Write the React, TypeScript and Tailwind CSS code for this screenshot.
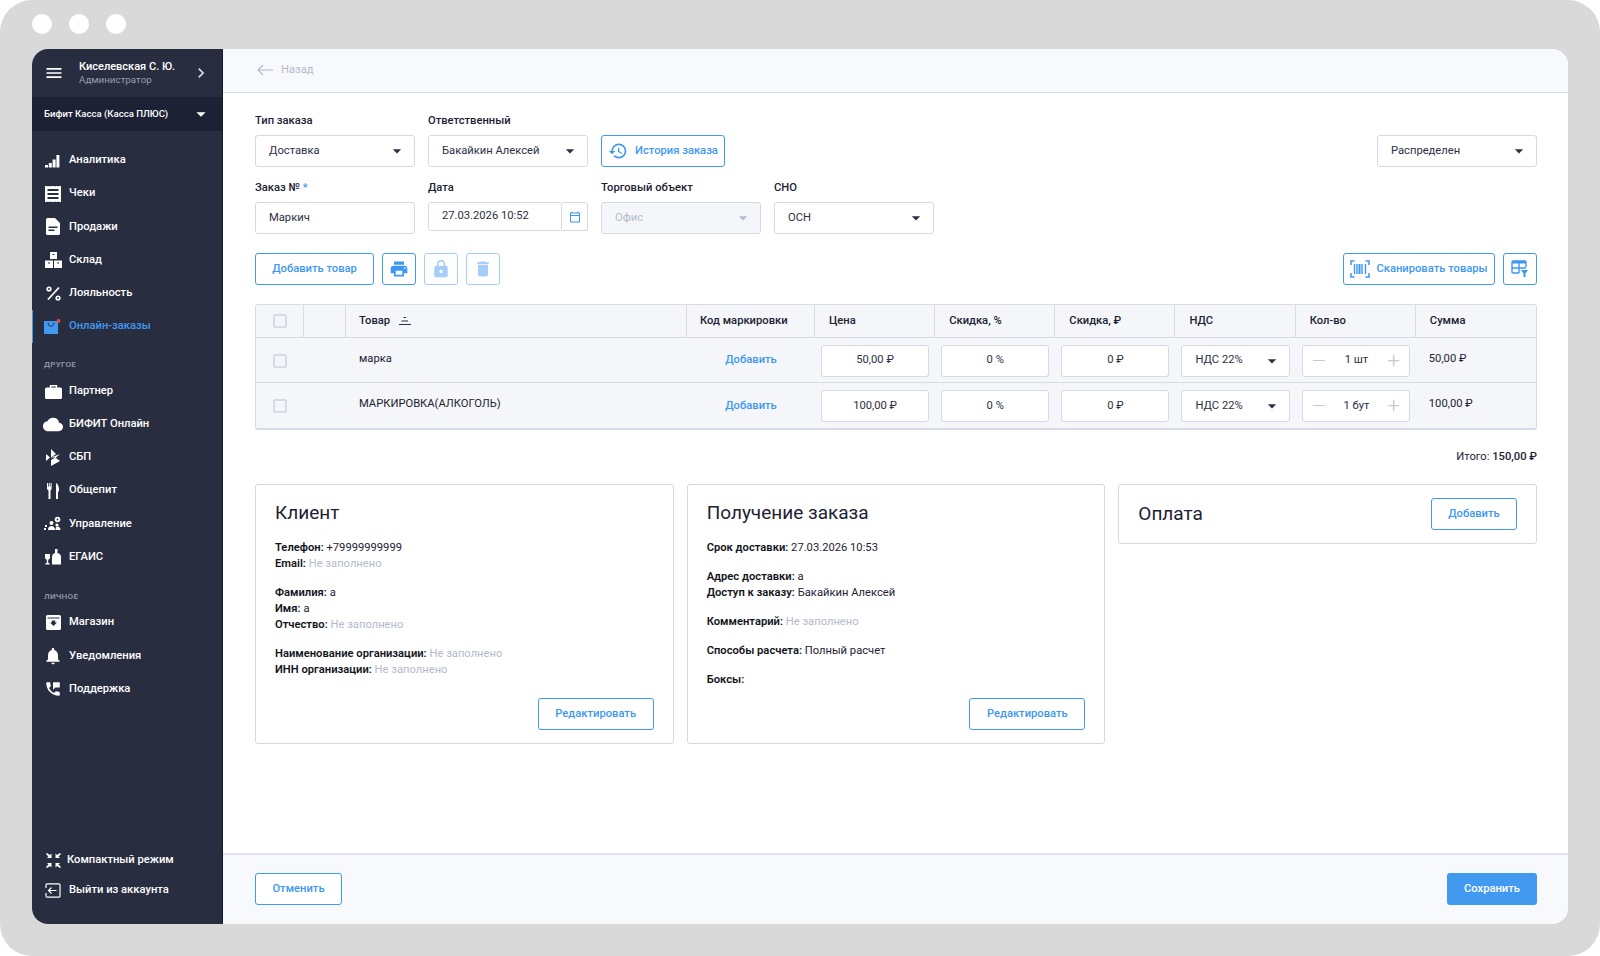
import React from "react";
import {
  MdMenu,
  MdChevronRight,
  MdArrowDropDown,
  MdPrint,
  MdLock,
  MdDelete,
  MdHistory,
  MdCloud,
  MdNotifications,
  MdPermPhoneMsg,
  MdOutlineCalendarToday,
} from "react-icons/md";

const Bars = () => (
  <svg width="16" height="14" viewBox="0 0 16 14" fill="#fff">
    <rect x="0" y="11" width="3" height="2.5" />
    <rect x="3.8" y="9" width="3" height="4.5" />
    <rect x="7.6" y="5.5" width="3" height="8" />
    <rect x="11.4" y="1" width="3" height="12.5" />
  </svg>
);
const Receipt = () => (
  <svg width="16" height="16" viewBox="0 0 16 16">
    <path
      fill="#fff"
      d="M0 0h2l1 .6L4 0h1l1 .6L7 0h2l1 .6L11 0h1l1 .6L14 0h2v16h-2l-1-.6-1 .6h-1l-1-.6-1 .6H7l-1-.6-1 .6H4l-1-.6-1 .6H0z"
    />
    <path fill="#292d40" d="M2.5 3h11v2h-11zM2.5 7h11v2h-11zM2.5 11h11v2h-11z" />
  </svg>
);
const Doc = () => (
  <svg width="14" height="17" viewBox="0 0 14 17">
    <path fill="#fff" d="M1.5 0H9l5 5v10.5a1.5 1.5 0 0 1-1.5 1.5h-11A1.5 1.5 0 0 1 0 15.500V1.500A1.500 1.500 0 0 1 1.500 0z" />
    <path fill="#292d40" d="M2.500 8.500h9v1.500h-9zM2.500 11.500h6v1.500h-6z" />
  </svg>
);
const Boxes = () => (
  <svg width="17" height="16" viewBox="0 0 17 16" fill="#fff">
    <path d="M5 0h7v7H5zM0 8.500h8V16H0zM9 8.500h8V16H9z" />
    <path fill="#292d40" d="M7.500 2h2v1h-2zM3 10.500h2v1H3zM12 10.500h2v1h-2z" />
  </svg>
);
const Percent = () => (
  <svg width="15" height="15" viewBox="0 0 15 15" fill="none" stroke="#fff">
    <circle cx="3" cy="3" r="1.800" strokeWidth="1.600" />
    <circle cx="12" cy="12" r="1.800" strokeWidth="1.600" />
    <path d="M13 1.500 2 13.500" strokeWidth="1.800" />
  </svg>
);
const Bag = () => (
  <svg width="18" height="15" viewBox="0 0 18 15">
    <path fill="#4299f0" d="M0 2h14v13H0z" />
    <path fill="none" stroke="#292d40" strokeWidth="1" d="M4 3.500c0 5 6 5 6 0" />
    <circle cx="14.500" cy="2" r="2" fill="#e2474c" />
  </svg>
);
const Briefcase = () => (
  <svg width="17" height="15" viewBox="0 0 17 15" fill="#fff">
    <path fill="none" stroke="#fff" strokeWidth="1.400" d="M5.500 4V1.700h6V4" />
    <rect x="0" y="3.500" width="17" height="11.500" rx="1.500" />
  </svg>
);
const Sbp = () => (
  <svg width="15" height="17" viewBox="0 0 15 17" fill="#fff">
    <path d="M5 0l5 5-5 3.500zM5 17l9-5-4.500-3.500L5 11zM0 5l4 3.500L0 12zM5 8.500l9-3.500-4 3.500z" />
  </svg>
);
const Cutlery = () => (
  <svg width="13" height="16" viewBox="0 0 13 16" fill="#fff">
    <path d="M0 0h1v3.500h.8V0h1v3.500h.8V0h1v6L3.500 7.500V16H1.500V7.500L0 6zM9 0c2 1 3 3 3 7.500v1h-1V16H9z" />
  </svg>
);
const Manage = () => (
  <svg width="18" height="15" viewBox="0 0 18 15" fill="#fff">
    <rect x="0" y="12" width="2" height="2" />
    <rect x="1" y="9" width="2" height="2" />
    <circle cx="7.500" cy="7" r="2" />
    <path d="M4 14c0-2.500 1.500-4 3.500-4s3.500 1.500 3.500 4z" />
    <circle cx="13" cy="9" r="1.600" />
    <path d="M11.500 14c0-2 .5-3.500 2-3.500s3 1.500 3 3.500z" />
    <circle cx="13.500" cy="3.500" r="2.800" />
    <circle cx="13.500" cy="3.500" r=".9" fill="#292d40" />
  </svg>
);
const Bottles = () => (
  <svg width="16" height="16" viewBox="0 0 16 16" fill="#fff">
    <path d="M0 5h5v3.500C5 10 4 10.500 3.200 10.500V14H4.500v1.500H.500V14H1.800v-3.500C1 10.500 0 10 0 8.500z" />
    <path d="M10 0h2.500v4c2 .8 3.500 1.500 3.500 4v7.500H7V8c0-2.500 1.500-3.200 3-4z" />
  </svg>
);
const Store = () => (
  <svg width="15" height="15" viewBox="0 0 15 15">
    <path fill="#fff" d="M1.500 0h12A1.500 1.500 0 0 1 15 1.500v12a1.500 1.500 0 0 1-1.500 1.500h-12A1.500 1.500 0 0 1 0 13.500v-12A1.500 1.500 0 0 1 1.500 0z" />
    <path fill="#292d40" d="M1.500 2.500h12v1h-12zM5.800 5.500h3.400v2H11L7.500 11 4 7.500h1.800z" />
  </svg>
);
const Compact = () => (
  <svg width="15" height="15" viewBox="0 0 15 15" fill="#fff">
    <path d="M1 0 0 1l2.500 2.500L1 5h4.500V.5L4 2zM14 0l1 1-2.500 2.500L14 5H9.500V.5L11 2zM1 15l-1-1 2.500-2.500L1 10h4.500v4.500L4 13zM14 15l1-1-2.500-2.500L14 10H9.500v4.500L11 13z" />
  </svg>
);
const Exit = () => (
  <svg width="16" height="15" viewBox="0 0 16 15" fill="none" stroke="#fff" strokeWidth="1.200">
    <path d="M1 5V2a1.200 1.200 0 0 1 1.200-1.200h11.600A1.200 1.200 0 0 1 15 2v11a1.200 1.200 0 0 1-1.200 1.200H2.200A1.200 1.200 0 0 1 1 13v-3" />
    <path d="M11.500 7.500H3.500M6.500 4.500l-3 3 3 3" />
  </svg>
);
const SortIcon = () => (
  <svg width="12" height="9" viewBox="0 0 12 9" fill="#2b2f45">
    <rect x="4.500" y="0" width="2.500" height="1" />
    <rect x="2.500" y="3.500" width="6.500" height="1" />
    <rect x="0" y="7" width="12" height="1" />
  </svg>
);
const Barcode = () => (
  <svg width="20" height="18" viewBox="0 0 20 18" fill="none" stroke="#3d97f3" strokeWidth="1.500">
    <path d="M4.500 1H1v4M15.500 1H19v4M4.500 17H1v-4M15.500 17H19v-4" />
    <path strokeWidth="1.400" d="M4.500 4v10M7 4v10M12 4v10M15.500 4v10" />
    <path strokeWidth="2" d="M9.500 4v10" />
  </svg>
);
const TableFilter = () => (
  <svg width="18" height="18" viewBox="0 0 18 18" fill="none" stroke="#3d97f3" strokeWidth="1.400">
    <path d="M8 13H2a1 1 0 0 1-1-1V2a1 1 0 0 1 1-1h12a1 1 0 0 1 1 1v5" />
    <path fill="#3d97f3" stroke="none" d="M1 1h14v2.500H1z" />
    <path d="M1 8h14M8 3v10" />
    <path fill="#3d97f3" stroke="none" d="M10 10h7l-2.500 3.500V17h-2v-3.500z" />
  </svg>
);

const mainMenu = [
  { label: "Аналитика", icon: <Bars /> },
  { label: "Чеки", icon: <Receipt /> },
  { label: "Продажи", icon: <Doc /> },
  { label: "Склад", icon: <Boxes /> },
  { label: "Лояльность", icon: <Percent /> },
];
const otherMenu = [
  { label: "Партнер", icon: <Briefcase /> },
  { label: "БИФИТ Онлайн", icon: <MdCloud size={21} color="#fff" /> },
  { label: "СБП", icon: <Sbp /> },
  { label: "Общепит", icon: <Cutlery /> },
  { label: "Управление", icon: <Manage /> },
  { label: "ЕГАИС", icon: <Bottles /> },
];
const personalMenu = [
  { label: "Магазин", icon: <Store /> },
  { label: "Уведомления", icon: <MdNotifications size={20} color="#fff" /> },
  { label: "Поддержка", icon: <MdPermPhoneMsg size={18} color="#fff" /> },
];

function MenuItem({ label, icon, active }: { label: string; icon: React.ReactNode; active?: boolean }) {
  return (
    <div className={`flex h-[33.2px] items-center gap-[6px] text-[11.2px] ${active ? "border-l border-[#4299f0] pl-[10px] text-[#4299f0]" : "pl-[11px] text-white"}`}>
      <span className="flex w-[20px] justify-center">{icon}</span>
      <span className="font-medium">{label}</span>
    </div>
  );
}

function SectionLabel({ children, className }: { children: string; className: string }) {
  return <div className={`pl-[12px] text-[8px] leading-[10px] font-medium tracking-[0.3px] uppercase text-[#9a9eb0] ${className}`}>{children}</div>;
}

function Sidebar() {
  return (
    <aside className="flex w-[191px] shrink-0 flex-col border-r border-[#161a2b] bg-[#292d40]">
      <div className="flex h-[48px] items-center pl-[12px] pr-[15px]">
        <MdMenu size={20} color="#fff" />
        <div className="ml-[15px] flex-1">
          <div className="text-[11px] leading-[14px] font-medium text-white">Киселевская С. Ю.</div>
          <div className="text-[9.8px] leading-[12px] text-[#9a9eb0]">Администратор</div>
        </div>
        <MdChevronRight size={20} color="#d5d8e3" className="mr-[-4px]" />
      </div>
      <div className="flex h-[34px] items-center justify-between bg-[#1c2133] pl-[12px] pr-[10px]">
        <span className="text-[9.6px] font-medium text-white">Бифит Касса (Касса ПЛЮС)</span>
        <MdArrowDropDown size={22} color="#fff" />
      </div>
      <nav className="pt-[13px]">
        {mainMenu.map((m) => (
          <MenuItem key={m.label} {...m} />
        ))}
        <MenuItem label="Онлайн-заказы" icon={<Bag />} active />
        <SectionLabel className="h-[31.5px] pt-[17px]">Другое</SectionLabel>
        {otherMenu.map((m) => (
          <MenuItem key={m.label} {...m} />
        ))}
        <SectionLabel className="h-[32.5px] pt-[18px]">Личное</SectionLabel>
        {personalMenu.map((m) => (
          <MenuItem key={m.label} {...m} />
        ))}
      </nav>
      <div className="mt-auto pb-[19px] text-[11.2px] font-medium text-white">
        <div className="flex h-[30px] items-center gap-[4px] pl-[11px]">
          <span className="flex w-[20px] justify-center"><Compact /></span>
          <span>Компактный режим</span>
        </div>
        <div className="flex h-[30px] items-center gap-[6px] pl-[11px]">
          <span className="flex w-[20px] justify-center"><Exit /></span>
          <span>Выйти из аккаунта</span>
        </div>
      </div>
    </aside>
  );
}

function Field({ label, children, required }: { label: string; children: React.ReactNode; required?: boolean }) {
  return (
    <div>
      <div className="mb-[6px] h-[16px] text-[11.2px] leading-[16px] font-medium text-[#1c2133]">
        {label}
        {required && <span className="text-[#4299f0]"> *</span>}
      </div>
      {children}
    </div>
  );
}

function Select({ value, className = "w-[160px]" }: { value: string; className?: string }) {
  return (
    <div className={`flex h-[32px] items-center justify-between rounded-[3px] border border-[#d5d9e6] bg-white pl-[13px] pr-[7px] text-[11.2px] text-[#2b2f45] ${className}`}>
      <span>{value}</span>
      <MdArrowDropDown size={20} color="#2b2f45" />
    </div>
  );
}

function OutlineButton({ children, className = "" }: { children: React.ReactNode; className?: string }) {
  return (
    <button className={`flex h-[32px] items-center justify-center rounded-[3px] border border-[#4299f0] bg-white text-[11.2px] font-medium text-[#3d97f3] ${className}`}>
      {children}
    </button>
  );
}

function Checkbox() {
  return <span className="block size-[14px] rounded-[2px] border-2 border-[#d8dbe6]" />;
}

function NumberBox({ value }: { value: string }) {
  return (
    <div className="flex h-[32px] items-center justify-center rounded-[3px] border border-[#d5d9e6] bg-white text-[11.2px] text-[#2b2f45]">
      {value}
    </div>
  );
}

const headers = ["Цена", "Скидка, %", "Скидка, ₽", "НДС", "Кол-во", "Сумма"];
const rows = [
  { name: "марка", price: "50,00 ₽", qty: "1 шт", sum: "50,00 ₽" },
  { name: "МАРКИРОВКА(АЛКОГОЛЬ)", price: "100,00 ₽", qty: "1 бут", sum: "100,00 ₽" },
];
const gridCols = "grid grid-cols-[48px_42px_341px_128px_repeat(6,1fr)]";

function ItemsTable() {
  return (
    <div className="rounded-[3px] border border-b-2 border-[#d8dbe6] bg-[#f5f6f9] text-[11.2px] text-[#1c2133]">
      <div className={`${gridCols} h-[33px] border-b border-[#d8dbe6] font-medium`}>
        <div className="flex items-center justify-center border-r border-[#d8dbe6]"><Checkbox /></div>
        <div className="border-r border-[#d8dbe6]" />
        <div className="flex items-center gap-[9px] border-r border-[#d8dbe6] px-[13px]">
          Товар <SortIcon />
        </div>
        <div className="flex items-center border-r border-[#d8dbe6] px-[13px]">Код маркировки</div>
        {headers.map((h, i) => (
          <div key={h} className={`flex items-center px-[14px] ${i < 5 ? "border-r border-[#d8dbe6]" : ""}`}>{h}</div>
        ))}
      </div>
      {rows.map((r, idx) => (
        <div key={r.name} className={`${gridCols} h-[45px] items-center pt-[1px] ${idx === 0 ? "border-b border-[#d8dbe6]" : ""}`}>
          <div className="flex justify-center"><Checkbox /></div>
          <div />
          <div className="px-[13px] pb-[3px]">{r.name}</div>
          <div className="text-center font-medium text-[#3d97f3]">Добавить</div>
          <div className="px-[6px]"><NumberBox value={r.price} /></div>
          <div className="px-[6px]"><NumberBox value="0 %" /></div>
          <div className="px-[6px]"><NumberBox value="0 ₽" /></div>
          <div className="px-[6px]"><Select value="НДС 22%" className="w-full" /></div>
          <div className="px-[6px]">
            <div className="flex h-[32px] items-center justify-between rounded-[3px] border border-[#d5d9e6] bg-white px-[9px] text-[11.2px] text-[#2b2f45]">
              <span className="text-[18px] leading-none font-light text-[#c5c9d8]">—</span>
              <span>{r.qty}</span>
              <span className="text-[22px] leading-none font-light text-[#c5c9d8]">+</span>
            </div>
          </div>
          <div className="px-[13px] pb-[3px]">{r.sum}</div>
        </div>
      ))}
    </div>
  );
}

function Line({ label, value, empty }: { label: string; value?: string; empty?: boolean }) {
  return (
    <div className="text-[11.2px] leading-[16px] text-[#1c2133]">
      <span className="font-semibold text-[#111420]">{label}</span>
      {value && " "}
      {value}
      {empty && <span className="text-[#b4bacd]"> Не заполнено</span>}
    </div>
  );
}

function Card({ title, children }: { title: string; children: React.ReactNode }) {
  return (
    <div className="flex h-[260px] flex-col rounded-[3px] border border-[#d5d9e6] px-[19px] pb-[13px] pt-[16px]">
      <h2 className="mb-[15px] text-[19px] leading-[24px] text-[#1c2133]">{title}</h2>
      <div className="flex flex-col gap-[13px]">{children}</div>
      <OutlineButton className="mt-auto w-[116px] self-end">Редактировать</OutlineButton>
    </div>
  );
}

export default function App() {
  return (
    <div className="bg-white font-['Roboto',sans-serif]">
      <div className="flex h-[956px] w-[1600px] flex-col rounded-[32px] bg-[#d9d9d9] px-[32px] pb-[32px]">
        <div className="flex h-[49px] shrink-0 items-center gap-[17px] pb-[1px]">
          <span className="size-[20px] rounded-full bg-white" />
          <span className="size-[20px] rounded-full bg-white" />
          <span className="size-[20px] rounded-full bg-white" />
        </div>
        <div className="flex min-h-0 flex-1 overflow-hidden rounded-[16px] bg-white">
          <Sidebar />
          <main className="flex min-w-0 flex-1 flex-col">
            <header className="flex h-[44px] shrink-0 items-center gap-[8px] border-b border-[#d8dbe6] bg-[#f8f9fd] pl-[34px] text-[11.2px] text-[#b4bacd]">
              <svg width="16" height="12" viewBox="0 0 16 12" fill="none" stroke="#b4bacd" strokeWidth="1.200" className="mb-[2px]">
                <path d="M16 6H1M6 1 1 6l5 5" />
              </svg>
              Назад
            </header>
            <div className="flex-1 pl-[32px] pr-[31px] pt-[20px]">
              <div className="flex items-end gap-[13px]">
                <Field label="Тип заказа"><Select value="Доставка" /></Field>
                <Field label="Ответственный"><Select value="Бакайкин Алексей" /></Field>
                <OutlineButton className="w-[124px] gap-[7px]">
                  <MdHistory size={20} />
                  История заказа
                </OutlineButton>
                <Select value="Распределен" className="ml-auto w-[160px]" />
              </div>
              <div className="mt-[13px] flex gap-[13px]">
                <Field label="Заказ №" required>
                  <div className="flex h-[32px] w-[160px] items-center rounded-[3px] border border-[#d5d9e6] pl-[13px] text-[11.2px] text-[#2b2f45]">Маркич</div>
                </Field>
                <Field label="Дата">
                  <div className="flex w-[160px]">
                    <div className="flex h-[29px] w-[134px] items-center rounded-[3px] border border-[#d5d9e6] pl-[13px] text-[11.2px] text-[#2b2f45]">27.03.2026 10:52</div>
                    <div className="flex h-[29px] w-[26px] items-center justify-center rounded-r-[3px] border border-l-0 border-[#d5d9e6]">
                      <MdOutlineCalendarToday size={12} color="#3d97f3" />
                    </div>
                  </div>
                </Field>
                <Field label="Торговый объект">
                  <div className="flex h-[32px] w-[160px] items-center justify-between rounded-[3px] border border-[#d5d9e6] bg-[#f5f6f9] pl-[13px] pr-[7px] text-[11.2px] text-[#b4bacd]">
                    <span>Офис</span>
                    <MdArrowDropDown size={20} color="#b4bacd" />
                  </div>
                </Field>
                <Field label="СНО"><Select value="ОСН" /></Field>
              </div>
              <div className="mt-[19px] flex gap-[8px]">
                <OutlineButton className="w-[119px]">Добавить товар</OutlineButton>
                <OutlineButton className="w-[34px]"><MdPrint size={20} /></OutlineButton>
                <OutlineButton className="w-[34px] border-[#a5cdf7] text-[#a5cdf7]"><MdLock size={20} /></OutlineButton>
                <OutlineButton className="w-[34px] border-[#a5cdf7] text-[#a5cdf7]"><MdDelete size={20} /></OutlineButton>
                <OutlineButton className="ml-auto w-[152px] gap-[6px]"><Barcode />Сканировать товары</OutlineButton>
                <OutlineButton className="w-[34px]"><TableFilter /></OutlineButton>
              </div>
              <div className="mt-[19px]"><ItemsTable /></div>
              <div className="mt-[19px] text-right text-[11.2px] leading-[16px] text-[#1c2133]">
                Итого: <span className="font-medium">150,00 ₽</span>
              </div>
              <div className="mt-[19px] grid grid-cols-3 items-start gap-[13px]">
                <Card title="Клиент">
                  <div>
                    <Line label="Телефон:" value="+79999999999" />
                    <Line label="Email:" empty />
                  </div>
                  <div>
                    <Line label="Фамилия:" value="а" />
                    <Line label="Имя:" value="а" />
                    <Line label="Отчество:" empty />
                  </div>
                  <div>
                    <Line label="Наименование организации:" empty />
                    <Line label="ИНН организации:" empty />
                  </div>
                </Card>
                <Card title="Получение заказа">
                  <Line label="Срок доставки:" value="27.03.2026 10:53" />
                  <div>
                    <Line label="Адрес доставки:" value="а" />
                    <Line label="Доступ к заказу:" value="Бакайкин Алексей" />
                  </div>
                  <Line label="Комментарий:" empty />
                  <Line label="Способы расчета:" value="Полный расчет" />
                  <Line label="Боксы:" />
                </Card>
                <div className="flex h-[60px] items-center justify-between rounded-[3px] border border-[#d5d9e6] px-[19px]">
                  <h2 className="text-[19px] leading-[24px] text-[#1c2133]">Оплата</h2>
                  <OutlineButton className="w-[86px]">Добавить</OutlineButton>
                </div>
              </div>
            </div>
            <footer className="flex h-[71px] shrink-0 items-center justify-between border-t-2 border-[#e0e2ec] bg-[#f8f9fd] pl-[32px] pr-[31px] pb-[1px]">
              <OutlineButton className="w-[87px]">Отменить</OutlineButton>
              <button className="h-[32px] w-[90px] rounded-[3px] bg-[#4299f0] text-[11.2px] font-medium text-white">Сохранить</button>
            </footer>
          </main>
        </div>
      </div>
    </div>
  );
}
